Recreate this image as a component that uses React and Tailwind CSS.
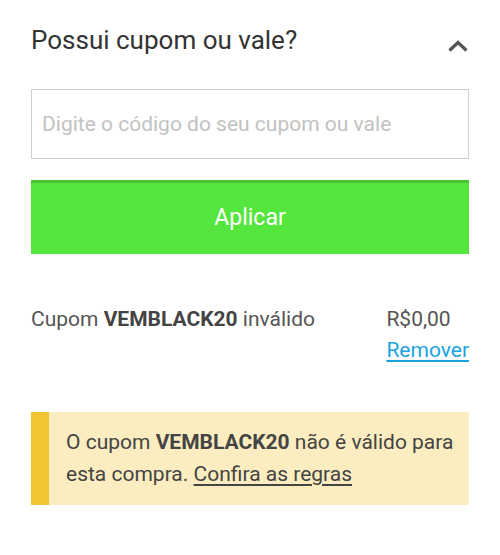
export default function App() {
  return (
    <div className="w-[500px] h-[555px] bg-white px-[31px] font-['Roboto','Liberation_Sans',sans-serif]">
      <div className="flex justify-between h-[89px]">
        <h2 className="mt-[24px] text-[26px] leading-[32px] text-[#333]">Possui cupom ou vale?</h2>
        <svg width="22" height="14" viewBox="0 0 22 14" className="mt-[39px]">
          <path d="M2.5 11.5 L11 3.5 L19.5 11.5" fill="none" stroke="#555" strokeWidth="3.2" />
        </svg>
      </div>
      <input
        className="block w-full h-[70px] border border-[#cfcfcf] px-[10px] text-[21px] text-[#333] placeholder:text-[#c2c2c2] outline-none"
        placeholder="Digite o código do seu cupom ou vale"
      />
      <button className="mt-[21px] block w-full h-[74px] bg-[#55e63e] border-t-[3px] border-[#46c232] text-white text-[23px]">
        Aplicar
      </button>
      <div className="mt-[50px] flex justify-between text-[21px] leading-[31px]">
        <p className="text-[#555]">
          Cupom <b className="text-[#444]">VEMBLACK20</b> inválido
        </p>
        <div className="text-[#555]">
          <p>R$0,00</p>
          <a className="text-[#1aa3e0] underline underline-offset-[3px]">Remover</a>
        </div>
      </div>
      <div className="mt-[46px] flex bg-[#fbedc0] h-[93px]">
        <div className="w-[18px] shrink-0 bg-[#f0c531]" />
        <p className="pl-[17px] pr-[12px] pt-[14px] text-[21px] leading-[32px] text-[#444]">
          O cupom <b>VEMBLACK20</b> não é válido para esta compra.{" "}
          <a className="underline underline-offset-[3px]">Confira as regras</a>
        </p>
      </div>
    </div>
  );
}
